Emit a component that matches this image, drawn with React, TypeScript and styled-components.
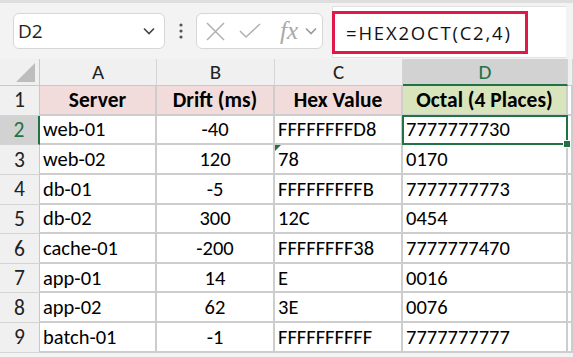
import React from "react";
import styled, { createGlobalStyle } from "styled-components";

const GlobalStyle = createGlobalStyle`
  html, body {
    margin: 0;
    padding: 0;
    background: #ffffff;
    overflow: hidden;
  }
`;

const GREEN = "#217346";
const CELL_FONT = `"Carlito", "Lato", "Noto Sans", sans-serif`;

const Page = styled.div`
  width: 573px;
  height: 357px;
  display: flex;
  flex-direction: column;
  background: #f3f3f3;
  overflow: hidden;
`;

const TopBar = styled.div`
  height: 59px;
  border-top: 3px solid #dedede;
  display: flex;
  align-items: center;
  padding-left: 13px;
  box-sizing: border-box;
  font-family: "Open Sans", "Noto Sans", sans-serif;
`;

const NameBox = styled.div`
  width: 152px;
  height: 36px;
  box-sizing: border-box;
  background: #fff;
  border: 1px solid #d6d6d6;
  border-radius: 6px;
  display: flex;
  align-items: center;
  justify-content: space-between;
  padding: 0 8px 0 4px;
  font-size: 19px;
  color: #222;
`;

const Dots = styled.div`
  width: 31px;
  display: flex;
  justify-content: center;
`;

const FxBox = styled.div`
  width: 127px;
  height: 36px;
  box-sizing: border-box;
  background: #fff;
  border: 1px solid #d6d6d6;
  border-radius: 6px;
  display: flex;
  align-items: center;
  gap: 13px;
  padding-left: 8px;
`;

const FxLabel = styled.span`
  font-family: "Liberation Serif", "DejaVu Serif", serif;
  font-style: italic;
  font-size: 25px;
  color: #a8a8a8;
  margin-left: 6px;
  margin-right: -7px;
`;

const FormulaBox = styled.div`
  margin-left: 9px;
  margin-top: 2px;
  width: 234px;
  height: 52px;
  background: #fff;
  border: 1px solid #e2e2e2;
  border-right: none;
  box-sizing: border-box;
  display: flex;
  align-items: center;
`;

const Highlight = styled.div`
  width: 196px;
  height: 43px;
  box-sizing: border-box;
  margin-left: -1px;
  border: 3px solid #e0194a;
  display: flex;
  align-items: center;
  padding-left: 11px;
  font-size: 18.5px;
  letter-spacing: 1.8px;
  color: #111;
`;

const Sheet = styled.div`
  display: grid;
  grid-template-columns: 40px 117px 118px 128px 165px 1fr;
  grid-template-rows: 27px repeat(9, 29.65px);
  background: #fff;
  font-family: ${CELL_FONT};
  font-size: 20.5px;
  color: #000;
`;

const ColHead = styled.div<{ $active?: boolean }>`
  box-sizing: border-box;
  background: ${(p) => (p.$active ? "#d2d2d2" : "#f0f0f0")};
  color: ${(p) => (p.$active ? GREEN : "#222")};
  font-size: 21px;
  border-right: 1px solid #d4d4d4;
  border-bottom: ${(p) => (p.$active ? `2px solid ${GREEN}` : "1px solid #c8c8c8")};
  display: flex;
  align-items: center;
  justify-content: center;
`;

const Corner = styled.div`
  box-sizing: border-box;
  background: #f0f0f0;
  border-right: 1px solid #c8c8c8;
  border-bottom: 1px solid #c8c8c8;
  display: flex;
  align-items: flex-end;
  justify-content: flex-end;
  padding: 0 4px 3px 0;
`;

const RowHead = styled.div<{ $active?: boolean }>`
  box-sizing: border-box;
  background: ${(p) => (p.$active ? "#d2d2d2" : "#f0f0f0")};
  color: ${(p) => (p.$active ? GREEN : "#222")};
  font-size: 21.5px;
  border-right: ${(p) => (p.$active ? `2px solid ${GREEN}` : "1px solid #c8c8c8")};
  border-bottom: 1px solid #d4d4d4;
  display: flex;
  align-items: center;
  justify-content: center;
`;

const Cell = styled.div<{ $align?: "left" | "center"; $bg?: string; $bold?: boolean }>`
  position: relative;
  box-sizing: border-box;
  background: ${(p) => p.$bg || "#fff"};
  font-weight: ${(p) => (p.$bold ? 700 : 400)};
  font-size: ${(p) => (p.$bold ? "21.5px" : "inherit")};
  border-right: 2px solid #cdcdcd;
  border-bottom: 2px solid #cdcdcd;
  display: flex;
  align-items: center;
  justify-content: ${(p) => (p.$align === "center" ? "center" : "flex-start")};
  padding-left: ${(p) => (p.$align === "center" ? "0" : "3px")};
  white-space: nowrap;
`;

const Selection = styled.div`
  position: absolute;
  z-index: 2;
  left: -1px;
  top: -1px;
  right: -2px;
  bottom: -2px;
  border: 2px solid ${GREEN};
  pointer-events: none;
`;

const FillHandle = styled.div`
  position: absolute;
  right: -5px;
  bottom: -5px;
  width: 6px;
  height: 6px;
  background: ${GREEN};
  border: 1px solid #fff;
`;

const ErrorFlag = styled.div`
  position: absolute;
  left: 0;
  top: 0;
  width: 0;
  height: 0;
  border-top: 6px solid ${GREEN};
  border-right: 6px solid transparent;
`;

const Chevron = ({ color = "#444", size = 14 }: { color?: string; size?: number }) => (
  <svg width={size} height={size} viewBox="0 0 14 14">
    <polyline points="2,4.5 7,9.5 12,4.5" fill="none" stroke={color} strokeWidth="1.6" />
  </svg>
);

const rows = [
  ["web-01", "-40", "FFFFFFFFD8", "7777777730"],
  ["web-02", "120", "78", "0170"],
  ["db-01", "-5", "FFFFFFFFFB", "7777777773"],
  ["db-02", "300", "12C", "0454"],
  ["cache-01", "-200", "FFFFFFFF38", "7777777470"],
  ["app-01", "14", "E", "0016"],
  ["app-02", "62", "3E", "0076"],
  ["batch-01", "-1", "FFFFFFFFFF", "7777777777"],
];

export default function App() {
  return (
    <Page>
      <GlobalStyle />
      <TopBar>
        <NameBox>
          <span>D2</span>
          <Chevron />
        </NameBox>
        <Dots>
          <svg width="6" height="16" viewBox="0 0 6 16">
            <circle cx="3" cy="2" r="1.6" fill="#555" />
            <circle cx="3" cy="8" r="1.6" fill="#555" />
            <circle cx="3" cy="14" r="1.6" fill="#555" />
          </svg>
        </Dots>
        <FxBox>
          <svg width="21" height="21" viewBox="0 0 21 21">
            <path d="M2 2 L19 19 M19 2 L2 19" stroke="#b0b0b0" strokeWidth="1.5" fill="none" />
          </svg>
          <svg width="22" height="18" viewBox="0 0 22 18">
            <polyline points="1,9 7,15 21,2" stroke="#b0b0b0" strokeWidth="1.5" fill="none" />
          </svg>
          <FxLabel>fx</FxLabel>
          <Chevron color="#9a9a9a" size={14} />
        </FxBox>
        <FormulaBox>
          <Highlight>=HEX2OCT(C2,4)</Highlight>
        </FormulaBox>
      </TopBar>
      <Sheet>
        <Corner>
          <svg width="19" height="19" viewBox="0 0 19 19">
            <polygon points="19,0 19,19 0,19" fill="#bdbdbd" />
          </svg>
        </Corner>
        <ColHead>A</ColHead>
        <ColHead>B</ColHead>
        <ColHead>C</ColHead>
        <ColHead $active>D</ColHead>
        <ColHead />

        <RowHead>1</RowHead>
        <Cell $align="center" $bg="#f2dcdb" $bold>Server</Cell>
        <Cell $align="center" $bg="#f2dcdb" $bold>Drift (ms)</Cell>
        <Cell $align="center" $bg="#f2dcdb" $bold>Hex Value</Cell>
        <Cell $align="center" $bg="#d8e4bc" $bold>Octal (4 Places)</Cell>
        <Cell />

        {rows.map((r, i) => (
          <React.Fragment key={r[0]}>
            <RowHead $active={i === 0}>{i + 2}</RowHead>
            <Cell>{r[0]}</Cell>
            <Cell $align="center">{r[1]}</Cell>
            <Cell>
              {i === 1 && <ErrorFlag />}
              {r[2]}
            </Cell>
            <Cell>
              {i === 0 && (
                <Selection>
                  <FillHandle />
                </Selection>
              )}
              {r[3]}
            </Cell>
            <Cell />
          </React.Fragment>
        ))}
      </Sheet>
    </Page>
  );
}
